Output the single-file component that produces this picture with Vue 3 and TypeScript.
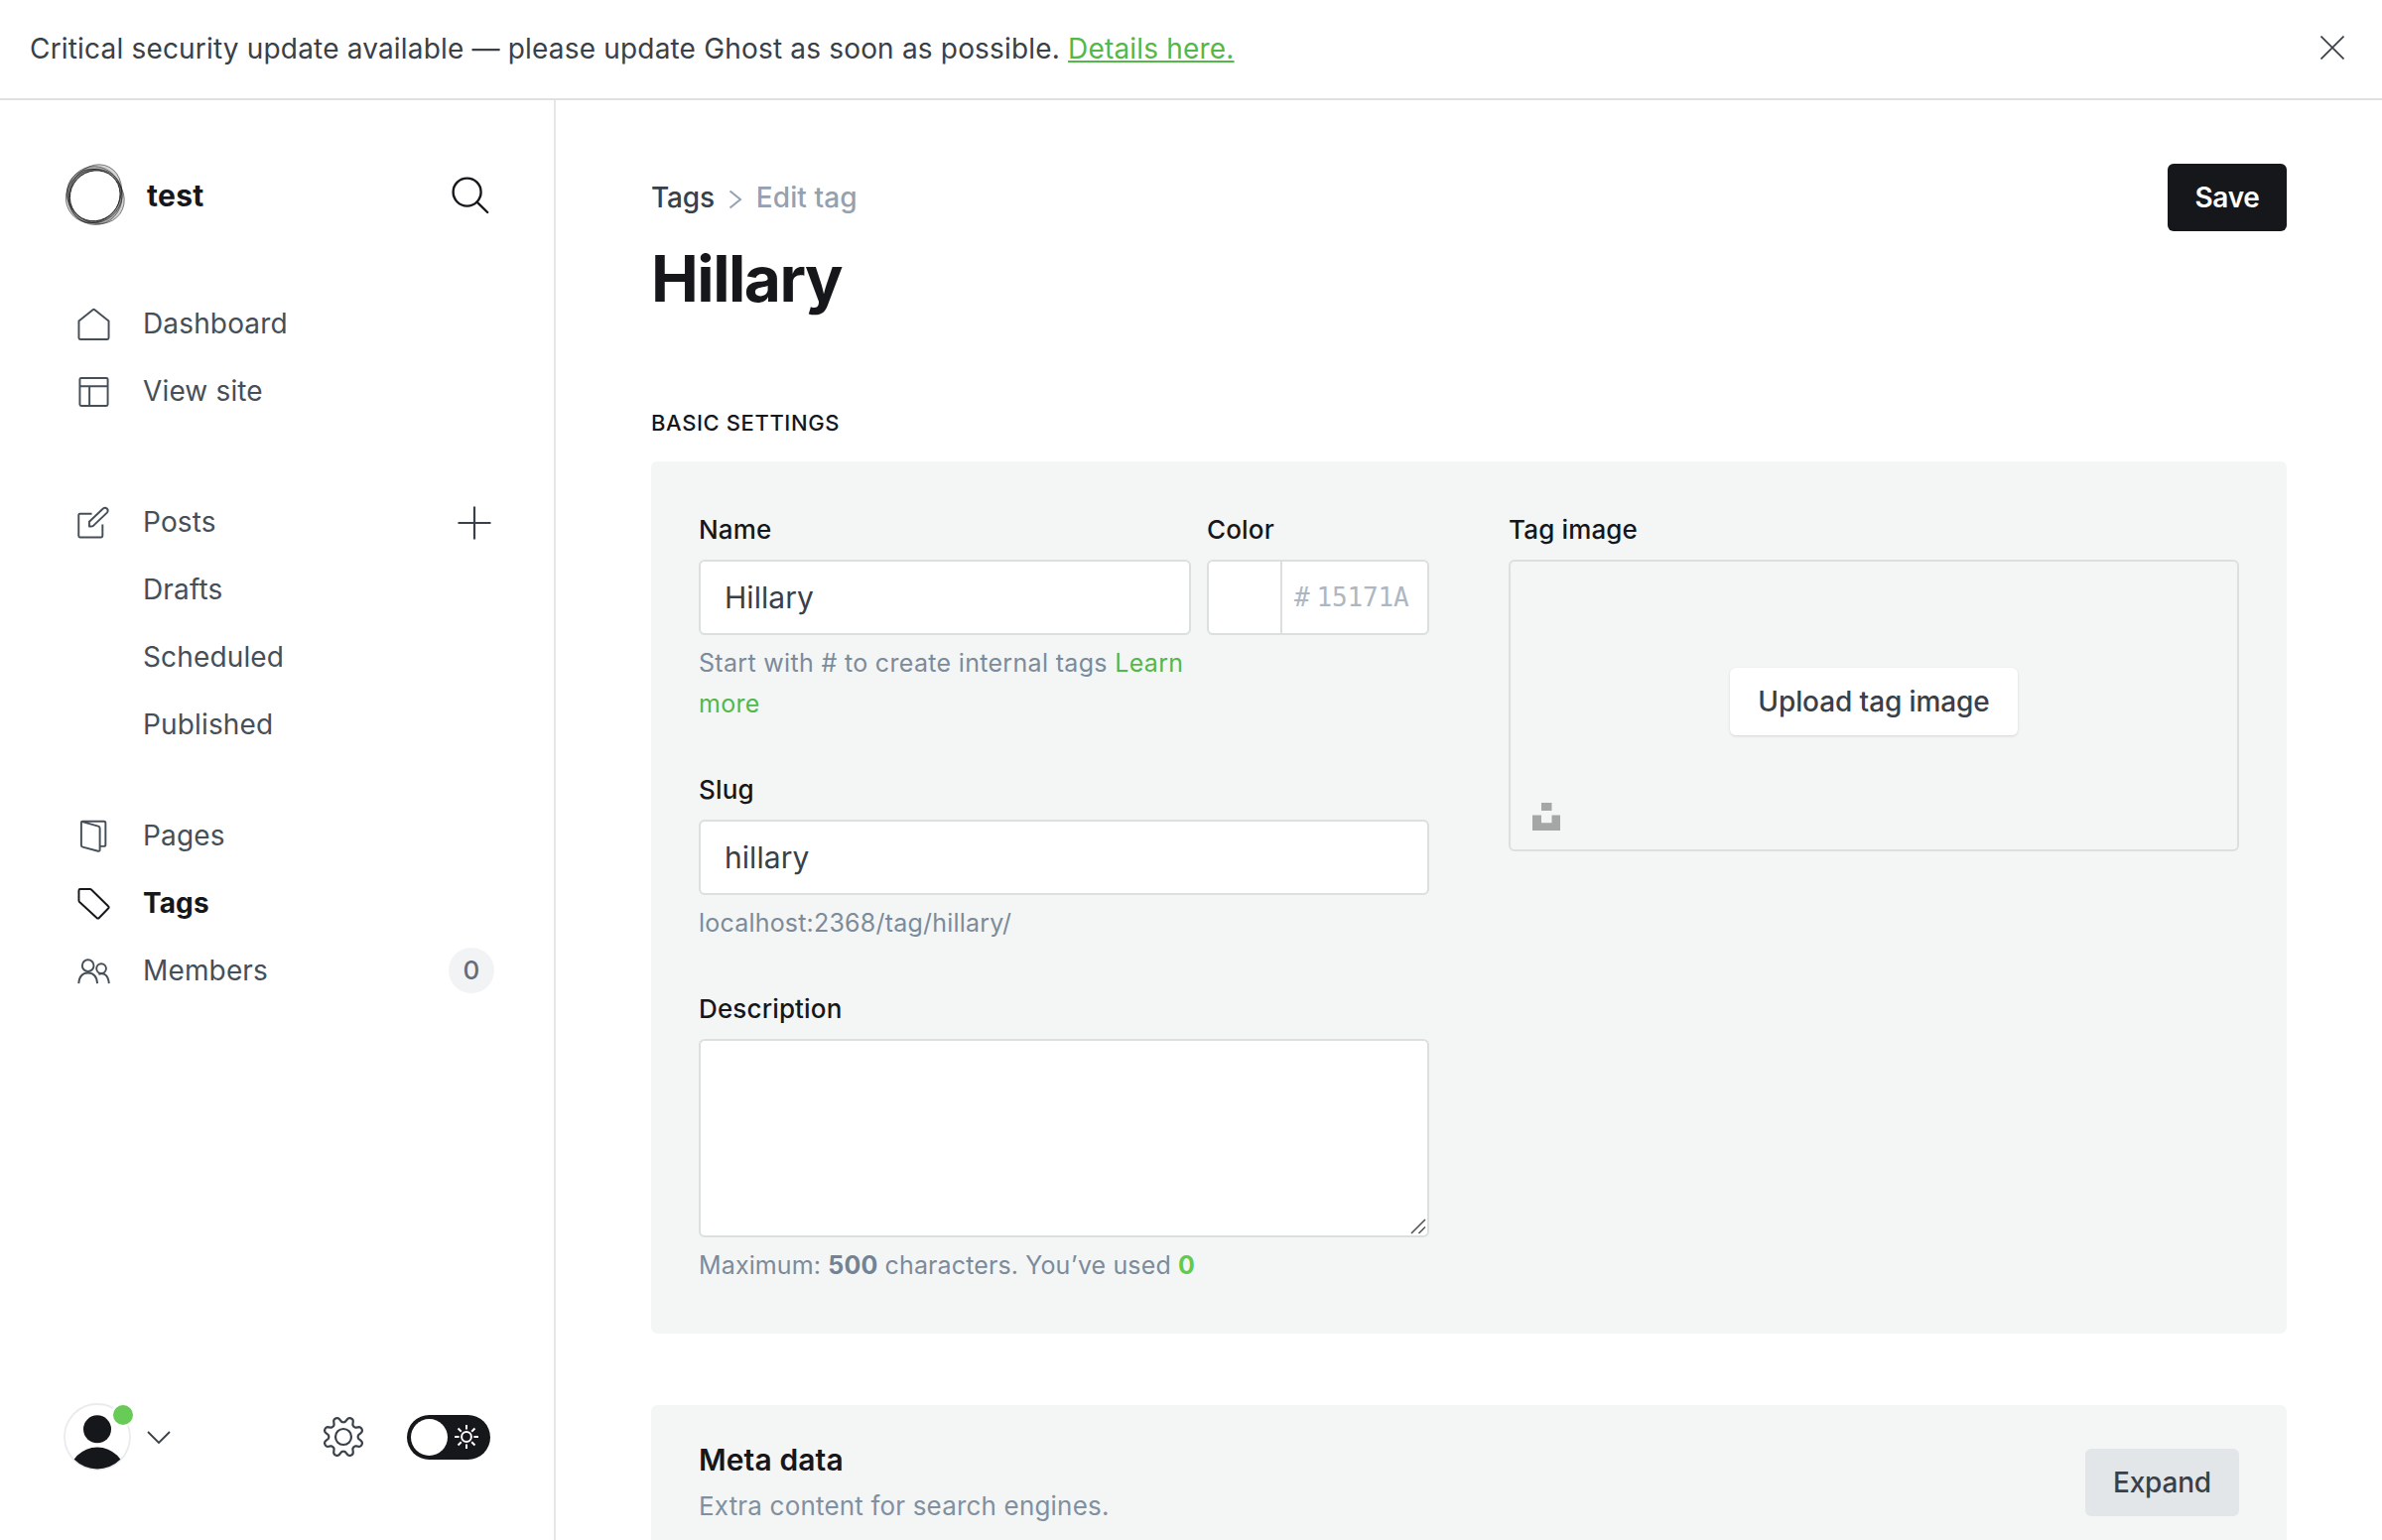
<script setup lang="ts">
import { ref } from 'vue'

interface NavItem {
  label: string
  icon?: string
  active?: boolean
  plus?: boolean
  count?: number
}

const siteTitle = ref('test')
const tagName = ref('Hillary')
const tagSlug = ref('hillary')

const navGroups: NavItem[][] = [
  [
    { label: 'Dashboard', icon: 'house' },
    { label: 'View site', icon: 'layout' },
  ],
  [
    { label: 'Posts', icon: 'edit', plus: true },
    { label: 'Drafts' },
    { label: 'Scheduled' },
    { label: 'Published' },
  ],
  [
    { label: 'Pages', icon: 'pages' },
    { label: 'Tags', icon: 'tag', active: true },
    { label: 'Members', icon: 'members', count: 0 },
  ],
]

// Eight rounded teeth around a circle
const gearPath = (() => {
  const steps = 160
  let d = ''
  for (let i = 0; i < steps; i++) {
    const a = (i / steps) * Math.PI * 2
    const wave = Math.tanh(1.5 * Math.cos(8 * (a - Math.PI / 8))) / Math.tanh(1.5)
    const r = 17.4 + 2.7 * wave
    d += `${i ? 'L' : 'M'}${(21 + r * Math.cos(a)).toFixed(2)} ${(21 + r * Math.sin(a)).toFixed(2)}`
  }
  return d + 'Z'
})()

const rays = [0, 45, 90, 135, 180, 225, 270, 315]
</script>

<template>
  <div class="app">
    <header class="banner">
      <p>Critical security update available — please update Ghost as soon as possible. <a>Details here.</a></p>
      <svg class="close" width="24" height="24" viewBox="0 0 24 24"><path d="M.5.5l23 23M23.5.5l-23 23" /></svg>
    </header>

    <div class="body">
      <nav class="sidebar">
        <div class="site">
          <svg class="logo" width="64" height="64" viewBox="0 0 64 64">
            <g fill="#000" fill-opacity=".17" stroke="#1c1c1c" stroke-width=".8" stroke-opacity=".6">
              <ellipse cx="33.500" cy="31" rx="30.400" ry="25.500" transform="rotate(-62 32 32)" />
              <ellipse cx="30.600" cy="32" rx="29" ry="26.800" transform="rotate(-30 32 32)" />
              <ellipse cx="32.800" cy="32.600" rx="30.200" ry="26.200" transform="rotate(35 32 32)" />
              <ellipse cx="32" cy="32.500" rx="29.500" ry="27.500" transform="rotate(80 32 32)" />
            </g>
            <ellipse cx="31.600" cy="32" rx="26.200" ry="24.600" fill="#fff" stroke="#1c1c1c" stroke-width=".9" transform="rotate(-48 32 32)" />
          </svg>
          <strong>{{ siteTitle }}</strong>
          <svg class="search" width="38" height="38" viewBox="0 0 38 38"><circle cx="15.6" cy="15.6" r="14" /><path d="M25.6 25.6L36.200 36" /></svg>
        </div>

        <ul v-for="(group, g) in navGroups" :key="g">
          <li v-for="item in group" :key="item.label" :class="{ active: item.active }">
            <span class="ico">
              <svg v-if="item.icon" width="34" height="34" viewBox="0 0 34 34">
                <template v-if="item.icon === 'house'"><path d="M1.500 14L16 2.200q1-.8 2 0L32.500 14V31.500q0 1.500-1.500 1.500H3q-1.500 0-1.500-1.500z" /></template>
                <template v-else-if="item.icon === 'layout'"><rect x="2.500" y="3" width="29" height="29" rx="1.500" /><path d="M2.500 11.500h29M12.500 11.500V32" /></template>
                <template v-else-if="item.icon === 'edit'"><path d="M15 8H2.700q-1.400 0-1.400 1.400V31q0 1.400 1.400 1.400h22q1.400 0 1.400-1.400V19" /><path d="M12.300 21.200v-5L26.700 2.600q2-1.600 3.900 0 1.900 2 .2 4.200L17 20q-1.400 1.200-3 1.200z" /></template>
                <template v-else-if="item.icon === 'pages'"><path d="M5 2.200l16.600 4.600q1.700.5 1.700 2.200v22.200q0 2-1.800 1.500L5.500 28.400Q4 28 4 26.600V3q0-1.200 1.200-1.200h22.300q1.700 0 1.700 1.700V26q0 1.700-1.700 1.700h-4" /></template>
                <template v-else-if="item.icon === 'tag'"><path d="M3 2h10q.8 0 1.400.6L32 19.800q1.300 1.200 0 2.400l-9.500 9.700q-1.200 1.200-2.400 0L2.200 15.500q-.7-.7-.7-1.700V3.500Q1.500 2 3 2z" /></template>
                <template v-else><circle cx="11" cy="11.500" r="6" /><circle cx="24.800" cy="14.500" r="5" /><path d="M1.300 30q.8-11 9.700-11t9.700 11M22 20.300q9.500-2.500 10.800 9.700" /></template>
              </svg>
            </span>
            <span class="label">{{ item.label }}</span>
            <svg v-if="item.plus" class="plus" width="34" height="34" viewBox="0 0 34 34"><path d="M17 .5v33M.5 17h33" /></svg>
            <span v-if="item.count !== undefined" class="count">{{ item.count }}</span>
          </li>
        </ul>

        <footer>
          <div class="avatar">
            <svg width="68" height="68" viewBox="0 0 68 68">
              <defs><clipPath id="avatar-clip"><circle cx="34" cy="34" r="32.500" /></clipPath></defs>
              <circle cx="34" cy="34" r="33" fill="#fff" stroke="#e9ebed" stroke-width="1.800" />
              <circle cx="34" cy="26.300" r="14" fill="#15171a" />
              <circle cx="34" cy="73" r="28.500" fill="#15171a" clip-path="url(#avatar-clip)" />
            </svg>
            <i class="dot"></i>
          </div>
          <svg class="chev" width="24" height="14" viewBox="0 0 24 14"><path d="M1 1l11 11L23 1" /></svg>
          <svg class="gear" width="42" height="42" viewBox="0 0 42 42"><path :d="gearPath" /><circle cx="21" cy="21" r="8" /></svg>
          <div class="toggle">
            <span class="knob"></span>
            <svg width="24" height="24" viewBox="0 0 24 24"><circle cx="12" cy="12" r="4.900" /><path v-for="r in rays" :key="r" d="M12 0v4.600" :transform="`rotate(${r} 12 12)`" /></svg>
          </div>
        </footer>
      </nav>

      <main>
        <div class="top">
          <div class="crumbs">
            <span>Tags</span>
            <svg width="14" height="20" viewBox="0 0 14 20"><path d="M1.500 1.500L12 10 1.500 18.500" /></svg>
            <span class="current">Edit tag</span>
          </div>
          <button class="btn dark">Save</button>
        </div>
        <h1>{{ tagName }}</h1>

        <h4>BASIC SETTINGS</h4>
        <section class="card basic">
          <div class="left">
            <div class="pair">
              <div class="field name">
                <label>Name</label>
                <div class="input">{{ tagName }}</div>
                <p class="hint">Start with # to create internal tags <a>Learn more</a></p>
              </div>
              <div class="field color">
                <label>Color</label>
                <div class="input split"><span class="swatch"></span><span class="hex"><span>#</span><span>15171A</span></span></div>
              </div>
            </div>
            <div class="field">
              <label>Slug</label>
              <div class="input">{{ tagSlug }}</div>
              <p class="hint url">localhost:2368/tag/{{ tagSlug }}/</p>
            </div>
            <div class="field">
              <label>Description</label>
              <div class="input area">
                <svg width="18" height="17" viewBox="0 0 18 17"><path d="M2 15L16 1M9.500 15L16 8.500" /></svg>
              </div>
              <p class="hint limit">Maximum: <b>500</b> characters. You’ve used <b class="ok">0</b></p>
            </div>
          </div>
          <div class="right">
            <label>Tag image</label>
            <div class="drop">
              <button class="btn white">Upload tag image</button>
              <svg class="unsplash" width="28" height="28" viewBox="0 0 28 28"><path d="M9 0h10.500v8H9zM0 12.400h9v7.800h10.500v-7.800H28V28H0z" /></svg>
            </div>
          </div>
        </section>

        <section class="card meta">
          <div>
            <h3>Meta data</h3>
            <p>Extra content for search engines.</p>
          </div>
          <button class="btn grey">Expand</button>
        </section>
      </main>
    </div>
  </div>
</template>

<style>
body { overflow: hidden; background: #fff; }
</style>

<style scoped>
* { box-sizing: border-box; margin: 0; padding: 0; }
svg { display: block; fill: none; flex: none; }
.app {
  width: 2400px; height: 1552px; overflow: hidden; display: flex; flex-direction: column;
  font-family: Inter, "Noto Sans", sans-serif; font-size: 28px; color: #394047; background: #fff;
}
.banner {
  flex: none; height: 101px; border-bottom: 2px solid #dfe1e1; padding: 0 38px 0 30px;
  display: flex; align-items: center; justify-content: space-between; letter-spacing: .18px;
}
.banner p { margin-bottom: 2px; }
.banner a { color: #54b848; text-decoration: underline; text-decoration-thickness: 2px; text-underline-offset: 2px; }
.close { stroke: #394047; stroke-width: 1.7; margin-bottom: 3px; }
.body { flex: 1; min-height: 0; display: flex; }

.sidebar { flex: none; width: 560px; border-right: 2px solid #e5e7e8; display: flex; flex-direction: column; padding-top: 64px; }
.site { height: 64px; margin: 0 65px 63px 64px; display: flex; align-items: center; }
.site strong { margin-left: 20px; font-size: 30px; font-weight: 700; color: #15171a; letter-spacing: .3px; }
.search { margin-left: auto; stroke: #15171a; stroke-width: 2.4; stroke-linecap: round; }
ul { list-style: none; padding: 0 60px 0 77px; }
ul + ul { margin-top: 64px; }
ul + ul + ul { margin-top: 44px; }
li { height: 68px; display: flex; align-items: center; color: #464f58; letter-spacing: .15px; }
.ico { width: 34px; height: 34px; flex: none; }
.ico svg { width: 33px; height: 33px; margin: 1px 0 0 1px; stroke: #464f58; stroke-width: 2; stroke-linejoin: round; }
.label { margin-left: 33px; }
.active { color: #15171a; font-weight: 700; letter-spacing: .1px; }
.active .ico svg { stroke: #15171a; }
.plus { margin-left: auto; margin-right: 3px; margin-top: 1px; stroke: #394047; stroke-width: 2.200; }
.count {
  margin-left: auto; width: 46px; height: 46px; border-radius: 23px; background: #f1f3f4; color: #626d79;
  font-size: 26px; font-weight: 500; line-height: 46px; text-align: center; letter-spacing: 0;
}
footer { margin-top: auto; margin-bottom: 70px; height: 68px; padding: 0 64px; display: flex; align-items: center; }
.avatar { position: relative; width: 68px; height: 68px; }
.dot { position: absolute; right: -4px; top: 0; width: 24px; height: 24px; border-radius: 50%; background: #68cb58; border: 2px solid #fff; }
.chev { margin-left: 16px; margin-top: 2px; stroke: #394047; stroke-width: 1.800; }
.gear { margin-left: 153px; stroke: #394047; stroke-width: 2.200; }
.toggle { margin-left: 43px; width: 84px; height: 45px; border-radius: 23px; background: #15171a; display: flex; align-items: center; padding-left: 4px; }
.knob { width: 37px; height: 37px; border-radius: 50%; background: #fff; margin-right: 7px; }
.toggle svg { stroke: #fff; stroke-width: 2; }

main { flex: 1; min-width: 0; padding: 64px 96px 0; display: flex; flex-direction: column; }
.top { height: 68px; display: flex; align-items: center; justify-content: space-between; }
.crumbs { display: flex; align-items: center; font-weight: 500; letter-spacing: -.2px; margin-top: 0; }
.crumbs svg { margin: 4px 14px 0 14px; stroke: #95a1af; stroke-width: 2; }
.current { color: #95a1af; letter-spacing: .1px; font-weight: 450; }
.btn { height: 68px; border: 0; border-radius: 6px; font: 500 28px/66px Inter, sans-serif; text-align: center; padding-bottom: 1px; }
.dark { width: 120px; background: #15171a; color: #fff; font-weight: 600; letter-spacing: -.3px; }
h1 { margin-top: 8px; height: 80px; line-height: 80px; font-size: 64px; font-weight: 700; letter-spacing: -1.500px; color: #15171a; }
h4 { margin-top: 93px; margin-bottom: 27px; height: 24px; line-height: 24px; font-size: 22px; font-weight: 500; letter-spacing: .6px; color: #15171a; }
.card { flex: none; background: #f4f6f6; border-radius: 6px; padding: 48px; display: flex; justify-content: space-between; }
.basic { height: 879px; }
.left, .right { width: 736px; }
.pair { display: flex; justify-content: space-between; }
.name { width: 496px; }
.color { width: 224px; }
.field { margin-bottom: 45.500px; }
.pair .field { margin-bottom: 0; }
.pair { margin-bottom: 45.500px; }
label { display: block; height: 40px; line-height: 41px; margin-bottom: 11px; font-size: 26px; font-weight: 500; color: #15171a; letter-spacing: .15px; }
.input { height: 76px; border: 2px solid #dcdfdf; border-radius: 6px; background: #fff; padding-left: 24px; font-size: 30px; line-height: 72px; letter-spacing: .05px; }
.split { display: flex; padding: 0; }
.swatch { width: 74px; border-right: 2px solid #dcdfdf; }
.hex { flex: 1; display: flex; gap: 7px; padding-left: 12px; font: 26px/72px "DejaVu Sans Mono", monospace; letter-spacing: -.15px; color: #aeb7c1; }
.area { height: 200px; display: flex; align-items: flex-end; justify-content: flex-end; }
.area svg { stroke: #555; stroke-width: 1.600; }
.hint { margin-top: 7.500px; font-size: 25px; line-height: 41px; letter-spacing: .32px; color: #7c8b9a; }
.url { letter-spacing: .2px; }
.limit { letter-spacing: .13px; }
.hint a { color: #54b848; }
.hint b { font-weight: 700; color: #738393; }
.hint .ok { color: #5fcb4f; }
.drop { position: relative; height: 294px; border: 2px solid #dcdfdf; border-radius: 6px; display: flex; justify-content: center; align-items: flex-start; padding-top: 107px; }
.white { width: 290px; background: #fff; color: #394047; box-shadow: 0 1px 3px rgba(0, 0, 0, .13); letter-spacing: -.1px; }
.unsplash { position: absolute; left: 22px; bottom: 19px; fill: #a5a7a7; }
.meta { margin-top: 72px; height: 240px; padding-top: 44px; }
h3 { margin-top: -7px; height: 36px; line-height: 36px; font-size: 30px; font-weight: 600; color: #15171a; letter-spacing: .1px; }
.meta p { margin-top: 8px; height: 42px; line-height: 42px; font-size: 26px; letter-spacing: .18px; color: #8190a0; }
.grey { width: 155px; background: #e2e6e9; color: #394047; letter-spacing: -.2px; }
</style>
